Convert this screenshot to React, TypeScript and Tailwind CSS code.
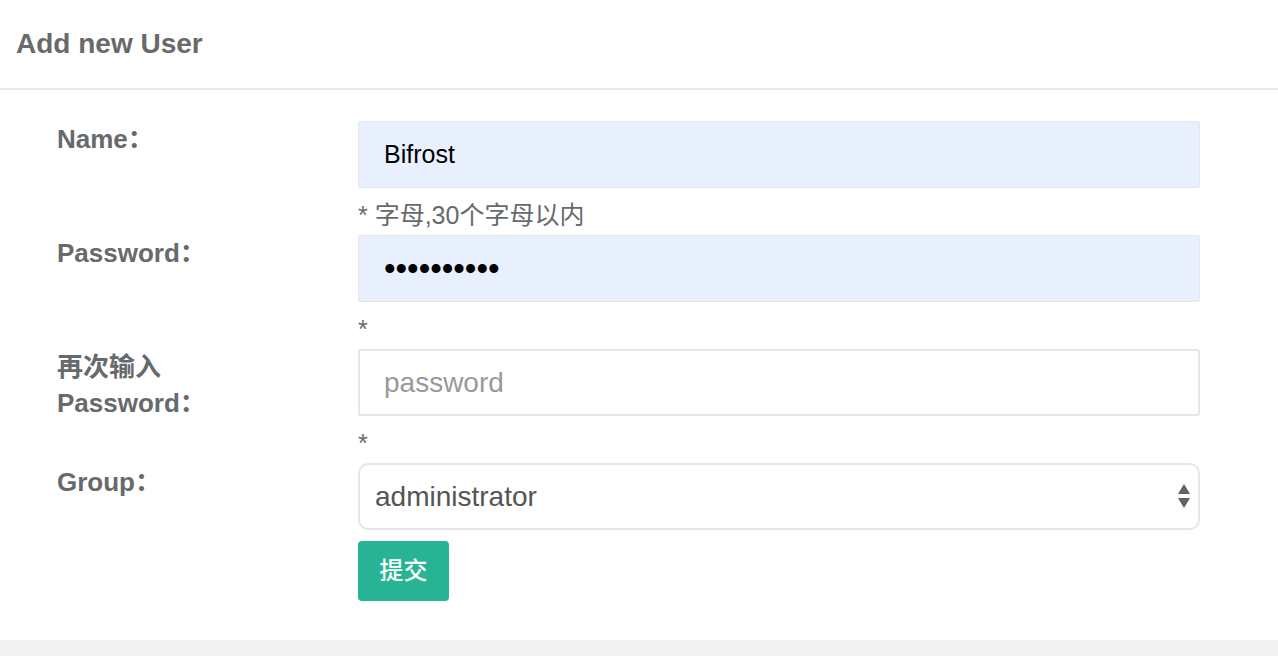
import { useState } from 'react'

const font = { fontFamily: '"Liberation Sans", Arial, "Noto Sans CJK SC", sans-serif' }

function Hint({ text }: { text: string }) {
    return (
        <div className="h-[47px] pt-[16px] text-[25px] leading-[22px] text-[#676a6c]">{text}</div>
    )
}

export default function App() {
    const [name, setName] = useState('Bifrost')
    const [pwd, setPwd] = useState('bifrost123')
    const [pwd2, setPwd2] = useState('')
    const [group, setGroup] = useState('administrator')

    return (
        <div className="min-h-screen bg-[#f3f3f4]" style={font}>
            <div className="bg-white h-[640px]">
                <div className="h-[90px] border-b-2 border-[#e7eaec] flex items-center pl-[16px]">
                    <h5 className="text-[28px] font-bold text-[#676a6c] leading-none">Add new User</h5>
                </div>

                <form className="pl-[57px] pt-[31px]" onSubmit={e => e.preventDefault()}>
                    {/* Name */}
                    <div className="flex">
                        <label className="w-[301px] text-[26px] font-bold leading-[36px] text-[#676a6c]">Name：</label>
                        <div className="w-[842px]">
                            <input
                                value={name}
                                onChange={e => setName(e.target.value)}
                                className="w-full h-[67px] bg-[#e8f0fe] border border-[#e5e6e7] rounded-[2px] px-[25px] text-[25px] text-black outline-none"
                            />
                            <Hint text="* 字母,30个字母以内" />
                        </div>
                    </div>

                    {/* Password */}
                    <div className="flex">
                        <label className="w-[301px] text-[26px] font-bold leading-[36px] text-[#676a6c]">Password：</label>
                        <div className="w-[842px]">
                            <input
                                type="password"
                                value={pwd}
                                onChange={e => setPwd(e.target.value)}
                                className="w-full h-[67px] bg-[#e8f0fe] border border-[#e5e6e7] rounded-[2px] px-[25px] text-[33px] text-black outline-none"
                            />
                            <Hint text="*" />
                        </div>
                    </div>

                    {/* Confirm */}
                    <div className="flex">
                        <label className="w-[301px] text-[26px] font-bold leading-[36px] text-[#676a6c]">
                            <span className="font-semibold">再次输入</span>
                            <br />
                            Password：
                        </label>
                        <div className="w-[842px]">
                            <input
                                type="password"
                                value={pwd2}
                                onChange={e => setPwd2(e.target.value)}
                                placeholder="password"
                                className="w-full h-[67px] bg-white border-2 border-[#e5e6e7] rounded-[2px] px-[24px] text-[28px] text-[#676a6c] placeholder:text-[#999] outline-none"
                            />
                            <Hint text="*" />
                        </div>
                    </div>

                    {/* Group */}
                    <div className="flex">
                        <label className="w-[301px] text-[26px] font-bold leading-[36px] text-[#676a6c] pt-[1px]">Group：</label>
                        <div className="w-[842px]">
                            <div className="relative">
                                <select
                                    value={group}
                                    onChange={e => setGroup(e.target.value)}
                                    className="w-full h-[67px] appearance-none bg-white border-2 border-[#e5e6e7] rounded-[10px] pl-[15px] text-[28px] text-[#555] outline-none"
                                >
                                    <option value="administrator">administrator</option>
                                    <option value="monitor">monitor</option>
                                </select>
                                <svg className="absolute right-[9px] top-[20px] pointer-events-none" width="14" height="26" viewBox="0 0 14 26">
                                    <path d="M7 1 L13 11 L1 11 Z" fill="#5f6163" />
                                    <path d="M1 15 L13 15 L7 25 Z" fill="#5f6163" />
                                </svg>
                            </div>
                            <button
                                type="submit"
                                className="mt-[11px] w-[91px] h-[60px] bg-[#27b494] text-white text-[24px] font-medium rounded-[4px]"
                            >
                                提交
                            </button>
                        </div>
                    </div>
                </form>
            </div>
        </div>
    )
}
